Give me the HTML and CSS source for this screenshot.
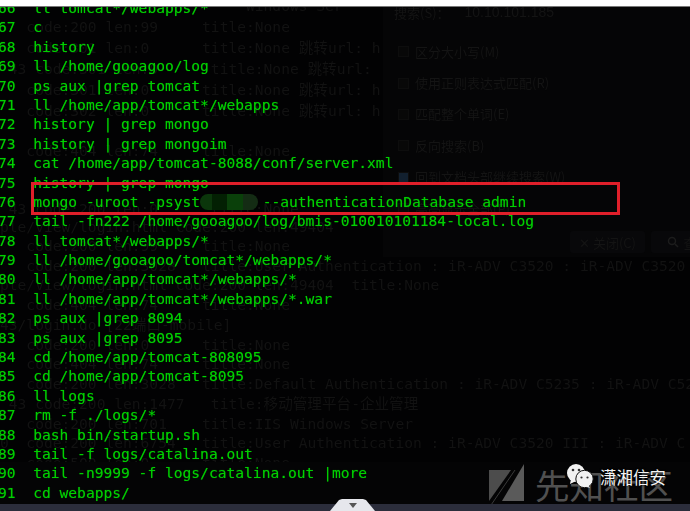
FILE: index.html
```html
<!DOCTYPE html>
<html lang="zh">
<head>
<meta charset="utf-8">
<title>Terminal history</title>
<link rel="stylesheet" href="styles.css">
</head>
<body>
<div class="topbar"></div>
<main class="terminal">
  <div class="ghost">
    <div class="g">                            Windows Ser</div>
    <div class="g g-cjk">   code:200 len:99     title:None</div>
    <div class="g g-cjk">   code:301 len:0      title:None 跳转url: h</div>
    <div class="g g-cjk"> 43 code:301 len:0      title:None 跳转url:</div>
    <div class="g g-cjk">   code:301 len:0      title:None 跳转url: h</div>
    <div class="g g-cjk">   code:302 len:0      title:None 跳转url: h</div>
    <div class="g"> </div>
    <div class="g">   code:404 len:74     title:None</div>
    <div class="g"> </div>
    <div class="g"> </div>
    <div class="g g-tight"> 43 code:200 len:0      title:None</div>
    <div class="g g-tight">ple/view/login.html code:200 len:49404</div>
    <div class="g">   code:200 len:99     title:None</div>
    <div class="g">   code:200 len:3028   title:User Authentication : iR-ADV C3520 : iR-ADV C3520</div>
    <div class="g">pte/View/login.html code:200 len:49404  title:None</div>
    <div class="g">   code:404 len:74     title:None</div>
    <div class="g">43/login.do [22端口-mobile]</div>
    <div class="g">   code:200 len:0      title:None</div>
    <div class="g">   code:404 len:74     title:None</div>
    <div class="g">   code:200 len:3028   title:Default Authentication : iR-ADV C5235 : iR-ADV C52</div>
    <div class="g"> 43 code:200 len:1477   title:移动管理平台-企业管理</div>
    <div class="g">   code:200 len:701    title:IIS Windows Server</div>
    <div class="g">0  code:200 len:6754   title:User Authentication : iR-ADV C3520 III : iR-ADV C</div>
    <div class="g">   code:500 len:0      title:None</div>
  </div>

  <aside class="dialog">
    <div class="d-search"><span>搜索(S)：</span><span class="d-value">10.10.101.185</span></div>
    <div class="d-opt"><i class="box"></i>区分大小写(M)</div>
    <div class="d-opt"><i class="box"></i>使用正则表达式匹配(R)</div>
    <div class="d-opt"><i class="box"></i>匹配整个单词(E)</div>
    <div class="d-opt"><i class="box"></i>反向搜索(B)</div>
    <div class="d-opt"><i class="box box-on"></i>回到文档头部继续搜索(W)</div>
    <div class="d-opt"><i class="box"></i>高亮显示全部(P)</div>
    <div class="d-buttons">
      <span class="d-btn">✕ 关闭(C)</span>
      <span class="d-btn">
        <svg width="12" height="12" viewBox="0 0 12 12" aria-hidden="true"><circle cx="5" cy="5" r="3.500" fill="none" stroke="#1c1c1c" stroke-width="1.500"/><path d="M8 8L11 11" stroke="#1c1c1c" stroke-width="1.500"/></svg>
        查找
      </span>
    </div>
  </aside>

  <div class="band"></div>

  <div class="lines">
    <div class="line"><span class="no">66</span><span>ll tomcat*/webapps/*</span></div>
    <div class="line"><span class="no">67</span><span>c</span></div>
    <div class="line"><span class="no">68</span><span>history</span></div>
    <div class="line"><span class="no">69</span><span>ll /home/gooagoo/log</span></div>
    <div class="line"><span class="no">70</span><span>ps aux |grep tomcat</span></div>
    <div class="line"><span class="no">71</span><span>ll /home/app/tomcat*/webapps</span></div>
    <div class="line"><span class="no">72</span><span>history | grep mongo</span></div>
    <div class="line"><span class="no">73</span><span>history | grep mongoim</span></div>
    <div class="line"><span class="no">74</span><span>cat /home/app/tomcat-8088/conf/server.xml</span></div>
    <div class="line"><span class="no">75</span><span>history | grep mongo</span></div>
    <div class="line"><span class="no">76</span><span>mongo -uroot -psyst<span class="redact"></span>--authenticationDatabase admin</span></div>
    <div class="line"><span class="no">77</span><span>tail -fn222 /home/gooagoo/log/bmis-010010101184-local.log</span></div>
    <div class="line"><span class="no">78</span><span>ll tomcat*/webapps/*</span></div>
    <div class="line"><span class="no">79</span><span>ll /home/gooagoo/tomcat*/webapps/*</span></div>
    <div class="line"><span class="no">80</span><span>ll /home/app/tomcat*/webapps/*</span></div>
    <div class="line"><span class="no">81</span><span>ll /home/app/tomcat*/webapps/*.war</span></div>
    <div class="line"><span class="no">82</span><span>ps aux |grep 8094</span></div>
    <div class="line"><span class="no">83</span><span>ps aux |grep 8095</span></div>
    <div class="line"><span class="no">84</span><span>cd /home/app/tomcat-808095</span></div>
    <div class="line"><span class="no">85</span><span>cd /home/app/tomcat-8095</span></div>
    <div class="line"><span class="no">86</span><span>ll logs</span></div>
    <div class="line"><span class="no">87</span><span>rm -f ./logs/*</span></div>
    <div class="line"><span class="no">88</span><span>bash bin/startup.sh</span></div>
    <div class="line"><span class="no">89</span><span>tail -f logs/catalina.out</span></div>
    <div class="line"><span class="no">90</span><span>tail -n9999 -f logs/catalina.out |more</span></div>
    <div class="line"><span class="no">91</span><span>cd webapps/</span></div>
  </div>

  <div class="highlight"></div>

  <div class="watermark">
    <svg class="wm-logo" width="38" height="46" viewBox="0 0 38 46" aria-hidden="true">
      <path d="M1 6H23L1 37Z" fill="#4c4c4c"/>
      <path d="M36 0V37H14Z" fill="#5a5a5a"/>
      <path d="M1 44L27 6" stroke="#3a3a3a" stroke-width="1" fill="none"/>
    </svg>
    <span class="wm-text">先知社区</span>
  </div>

  <div class="wechat">
    <svg width="28" height="26" viewBox="0 0 28 26" aria-hidden="true">
      <circle cx="10" cy="10" r="9" fill="#f2f2f2"/>
      <path d="M5 16L4 21L10 18Z" fill="#f2f2f2"/>
      <circle cx="7" cy="7" r="1.300" fill="#333"/>
      <circle cx="13" cy="7" r="1.300" fill="#333"/>
      <circle cx="18.500" cy="16" r="8.700" fill="#f2f2f2" stroke="#111" stroke-width="1"/>
      <path d="M22 22L24 25L18 23Z" fill="#f2f2f2"/>
      <circle cx="15.500" cy="14.500" r="1.100" fill="#333"/>
      <circle cx="21.500" cy="14.500" r="1.100" fill="#333"/>
    </svg>
    <span class="wechat-name">潇湘信安</span>
  </div>
</main>
<footer class="bottombar">
  <div class="tab"><i class="arrow"></i></div>
</footer>
</body>
</html>
```
FILE: styles.css
```css
* { box-sizing: border-box; }

html, body {
  margin: 0;
  width: 690px;
  height: 511px;
  overflow: hidden;
  background: #000;
}

body {
  display: flex;
  flex-direction: column;
  font-family: "DejaVu Sans Mono", "Noto Sans CJK SC", monospace;
}

.topbar {
  flex: 0 0 7px;
  background: #fff;
  border-bottom: 1px solid #777;
}

.terminal {
  position: relative;
  flex: 1 1 auto;
  min-height: 0;
  overflow: hidden;
  background: #020203;
}

.lines {
  position: relative;
  margin: -9px 0 0 -2px;
  font-size: 14.6px;
  line-height: 19.4px;
  color: #00d000;
  text-shadow: 0 0 1px rgba(0, 208, 0, 0.55);
  filter: blur(0.3px);
}

.line { display: flex; height: 19.4px; white-space: pre; }
.no { flex: 0 0 35.2px; }

.redact {
  display: inline-block;
  width: 58px;
  height: 16px;
  margin: 0 4.500px 0 0;
  vertical-align: -3px;
  border-radius: 8px;
  background: linear-gradient(90deg, #0b360b 0 20%, #032003 20% 47%, #0a400a 47% 75%, #142c14 75% 100%);
}

.ghost {
  position: absolute;
  top: -11px;
  left: 0;
  width: 690px;
  font-size: 14.6px;
  color: #121212;
  filter: blur(0.5px);
}
.g { height: 19.75px; line-height: 19.75px; white-space: pre; }
.g-cjk { height: 21px; line-height: 21px; }
.g-tight { height: 18px; line-height: 18px; }

.dialog {
  position: absolute;
  top: 0;
  left: 383px;
  width: 307px;
  height: 250px;
  padding: 0 0 0 11px;
  background: #050506;
  color: #141414;
  font-family: "Noto Sans CJK SC", sans-serif;
  font-size: 13px;
  filter: blur(0.5px);
}

.d-search {
  display: flex;
  gap: 15px;
  height: 14px;
  line-height: 11px;
}
.d-value { font-family: "Liberation Sans", sans-serif; font-size: 14px; }

.d-opt {
  display: flex;
  align-items: center;
  gap: 6px;
  height: 31.400px;
  margin-left: 4px;
  line-height: 18px;
}
.d-search + .d-opt { margin-top: 15px; }

.box {
  width: 11px;
  height: 11px;
  border: 1px solid #0d0d0d;
  background: #080808;
}
.box-on { background: #12202f; }

.d-buttons {
  display: flex;
  gap: 6px;
  margin: 7px 0 0 176px;
}
.d-btn {
  display: flex;
  align-items: center;
  justify-content: center;
  gap: 4px;
  flex: 0 0 75px;
  height: 22px;
  background: #08080a;
  border-radius: 3px;
}

.band {
  position: absolute;
  top: 455px;
  left: 0;
  width: 690px;
  height: 50px;
  background: #040405;
}

.highlight {
  position: absolute;
  top: 175px;
  left: 31px;
  width: 589px;
  height: 33px;
  border: 3px solid #e01f2a;
}

.watermark {
  position: absolute;
  left: 488px;
  top: 457px;
  display: flex;
  align-items: flex-start;
  gap: 9px;
}
.wm-logo { display: block; }
.wm-text {
  font-family: "Noto Sans CJK SC", sans-serif;
  font-size: 34.500px;
  line-height: 40px;
  color: #505050;
  white-space: nowrap;
}

.wechat {
  position: absolute;
  left: 566px;
  top: 458px;
  display: flex;
  align-items: center;
  gap: 6px;
}
.wechat svg { display: block; margin-top: -2px; }
.wechat-name {
  font-family: "Noto Sans CJK SC", sans-serif;
  font-size: 16.500px;
  line-height: 22px;
  color: #f4f4f4;
  white-space: nowrap;
  text-shadow: 0 0 2px #000;
}

.bottombar {
  position: relative;
  flex: 0 0 7px;
  background: #2b2d3b;
}

.tab {
  position: absolute;
  left: 330px;
  bottom: 0;
  width: 45px;
  height: 12px;
  background: #e6e7ec;
  clip-path: polygon(0 100%, 9px 1px, 12px 0, 33px 0, 36px 1px, 100% 100%);
  display: flex;
  justify-content: center;
  padding-top: 4px;
}
.arrow {
  width: 0;
  height: 0;
  border-left: 4px solid transparent;
  border-right: 4px solid transparent;
  border-top: 5px solid #555;
}
```
